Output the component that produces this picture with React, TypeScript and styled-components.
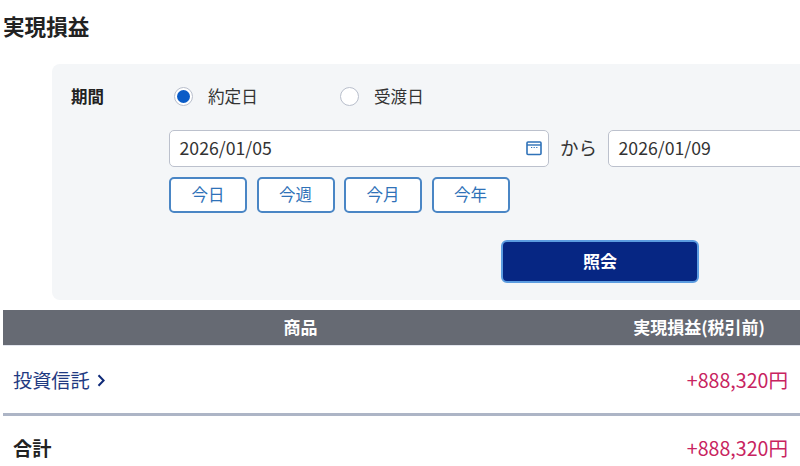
import React from "react";
import styled, { createGlobalStyle } from "styled-components";

const Global = createGlobalStyle`
  html, body { margin: 0; padding: 0; background: #fff; overflow: hidden; }
  body { font-family: "Noto Sans CJK JP", "Noto Sans", sans-serif; color: #222; }
`;
const Page = styled.div`
  width: 800px; height: 466px; overflow: hidden; padding-left: 3px; box-sizing: border-box;
`;
const Title = styled.h1`
  margin: 0; height: 64px; padding-top: 12px; box-sizing: border-box;
  font-size: 21.6px; line-height: 28px; font-weight: 700; color: #222; letter-spacing: 0;
`;
const Panel = styled.section`
  margin-left: 49px; width: 800px; height: 236px; box-sizing: border-box;
  background: #f4f6f8; border-radius: 8px; display: grid;
  grid-template-columns: 98px 1fr; padding: 21px 0 0 19px;
`;
const Label = styled.div`
  font-size: 16.5px; line-height: 22px; font-weight: 700; color: #222;
`;
const Fields = styled.div`display: flex; flex-direction: column; align-items: flex-start;`;
const Radios = styled.div`display: flex; height: 24px; align-items: center; margin-left: 5px; margin-bottom: 21px;`;
const RadioItem = styled.label`
  display: flex; align-items: center; gap: 15px; width: 166px;
  font-size: 16.6px; color: #333; line-height: 24px;
  position: relative; top: -1px;
`;
const RadioMark = styled.span<{ $on?: boolean }>`
  width: 19px; height: 19px; border-radius: 50%; box-sizing: border-box;
  background: #fff; border: 1px solid #b9bfcc; display: grid; place-items: center;
  &::after {
    content: ""; width: 13px; height: 13px; border-radius: 50%;
    background: ${p => (p.$on ? "#0a5cc7" : "transparent")};
  }
`;
const DateRow = styled.div`display: flex; align-items: center; margin-bottom: 10px;`;
const DateBox = styled.div<{ $w: number }>`
  width: ${p => p.$w}px; height: 37px; box-sizing: border-box; flex: none;
  background: #fff; border: 1.5px solid #bcc1cd; border-radius: 5px;
  display: flex; align-items: center; justify-content: space-between;
  padding: 0 6px 4px 9.5px; font-size: 17.7px; color: #333;
  svg { position: relative; top: 1px; }
`;
const Sep = styled.span`flex: none; width: 59px; text-align: center; font-size: 18.5px; color: #333; padding-bottom: 3px;`;
const Quick = styled.div`display: flex; gap: 9.5px;`;
const QuickBtn = styled.button`
  width: 78px; height: 36px; box-sizing: border-box; padding: 0 0 3px; background: #fff;
  border: 2px solid #4a86c5; border-radius: 5px; color: #2f72b8;
  font: 400 16.5px "Noto Sans CJK JP", sans-serif;
`;
const Submit = styled.button`
  width: 198px; height: 43px; box-sizing: border-box; margin: 27px 0 0 332px; padding: 0 0 3px;
  background: #062683; border: 2px solid #5b9ce0; border-radius: 6px; color: #fff;
  font: 700 17px "Noto Sans CJK JP", sans-serif;
`;
const Head = styled.div`
  margin-top: 10px; height: 35px; background: #666a73; color: #fff; font-size: 17px; font-weight: 700;
  display: grid; grid-template-columns: 1fr 165px 35px; align-items: center;
  border-bottom: 1px solid #e3e6ee; box-sizing: content-box;
`;
const HeadName = styled.span`text-align: center; padding-right: 2px; padding-bottom: 2px;`;
const HeadAmount = styled.span`text-align: right; white-space: nowrap; padding-bottom: 2px;`;
const Row = styled.div<{ $total?: boolean }>`
  height: ${p => (p.$total ? 50 : 70)}px; display: flex; align-items: ${p => (p.$total ? "flex-start" : "center")};
  justify-content: space-between; padding: ${p => (p.$total ? "19px 12px 0 10px" : "1px 12px 0 10px")};
  box-sizing: border-box;
  border-bottom: ${p => (p.$total ? "none" : "3px solid #adb5c6")};
`;
const ProductLink = styled.a`
  display: flex; align-items: center; gap: 7px; color: #1f3a82; font-size: 19.2px; line-height: 26px;
`;
const TotalName = styled.span`font-size: 19.2px; line-height: 26px; font-weight: 700; color: #222;`;
const Amount = styled.span`font-size: 19.6px; line-height: 26px; color: #c8235f;`;

const CalendarIcon = () => (
  <svg width="16" height="16" viewBox="0 0 16 16" fill="none">
    <rect x="1" y="2" width="14" height="12.5" rx="1" stroke="#2f72b8" strokeWidth="1.6" />
    <path d="M1 5h14" stroke="#2f72b8" strokeWidth="1.4" />
    <path d="M5 7.5h1.2M7.6 7.5h1.2M10.2 7.5h1.2" stroke="#2f72b8" strokeWidth="1.1" />
  </svg>
);
const Chevron = () => (
  <svg width="8" height="13" viewBox="0 0 8 13" fill="none">
    <path d="M1.5 1.2 6.6 6.5l-5.1 5.3" stroke="#0f2a78" strokeWidth="2" />
  </svg>
);

export default function App() {
  return (
    <Page>
      <Global />
      <Title>実現損益</Title>
      <Panel>
        <Label>期間</Label>
        <Fields>
          <Radios>
            <RadioItem><RadioMark $on />約定日</RadioItem>
            <RadioItem><RadioMark />受渡日</RadioItem>
          </Radios>
          <DateRow>
            <DateBox $w={380}>2026/01/05<CalendarIcon /></DateBox>
            <Sep>から</Sep>
            <DateBox $w={380}>2026/01/09</DateBox>
          </DateRow>
          <Quick>
            {["今日", "今週", "今月", "今年"].map(t => <QuickBtn key={t}>{t}</QuickBtn>)}
          </Quick>
          <Submit>照会</Submit>
        </Fields>
      </Panel>
      <Head>
        <HeadName>商品</HeadName>
        <HeadAmount>実現損益(税引前)</HeadAmount>
        <span />
      </Head>
      <Row>
        <ProductLink>投資信託<Chevron /></ProductLink>
        <Amount>+888,320円</Amount>
      </Row>
      <Row $total>
        <TotalName>合計</TotalName>
        <Amount>+888,320円</Amount>
      </Row>
    </Page>
  );
}
